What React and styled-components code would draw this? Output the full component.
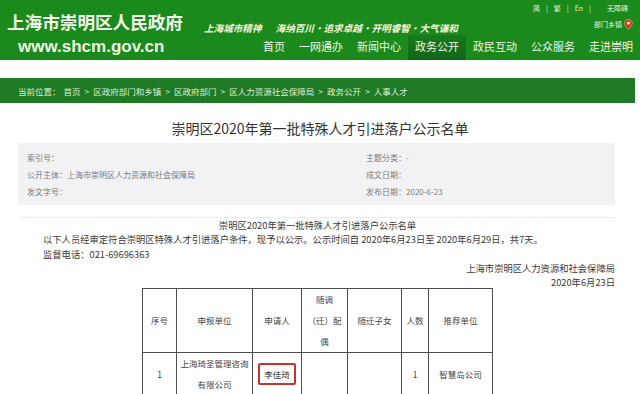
import React from "react";
import styled, { createGlobalStyle } from "styled-components";

const GlobalStyle = createGlobalStyle`
  html, body {
    margin: 0;
    padding: 0;
    background: #fff;
  }
  body {
    width: 640px;
    overflow: hidden;
    font-family: "Noto Sans CJK SC", "Noto Sans", sans-serif;
    color: #333;
  }
`;

const Header = styled.header`
  height: 60px;
  background: #1b8a1d;
  display: flex;
  color: #eef7e8;
`;

const Brand = styled.div`
  width: 192px;
  flex: none;
  padding: 11px 0 0 7px;
  box-sizing: border-box;
`;

const SiteName = styled.div`
  font-size: 17.6px;
  font-weight: 700;
  line-height: 22px;
  white-space: nowrap;
  color: #f2f8ee;
`;

const SiteUrl = styled.div`
  margin: 4px 0 0 11px;
  font-family: "Liberation Sans", Arial, sans-serif;
  font-size: 17px;
  font-weight: 700;
  line-height: 20px;
  color: #eef6e6;
`;

const HeaderRight = styled.div`
  flex: 1;
  display: flex;
  flex-direction: column;
`;

const TopLinks = styled.div`
  height: 16px;
  display: flex;
  align-items: center;
  justify-content: flex-end;
  gap: 6px;
  padding-right: 12px;
  font-size: 7px;
  color: #e4f2dc;
`;

const TopLink = styled.span`
  margin-left: ${(p) => (p.$wide ? "10px" : "0")};
`;

const MiddleRow = styled.div`
  height: 19px;
  display: flex;
  align-items: center;
  justify-content: space-between;
  padding: 0 7px 0 12px;
`;

const Slogan = styled.div`
  display: flex;
  gap: 14px;
  margin-top: 4px;
  font-size: 9.6px;
  font-weight: 700;
  font-style: italic;
  color: #f6f3dc;
  white-space: nowrap;
`;

const Departments = styled.div`
  display: flex;
  align-items: center;
  gap: 2px;
  margin-top: -3px;
  font-size: 7px;
  color: #eaf5e2;
`;

const Nav = styled.nav`
  height: 25px;
  display: flex;
  justify-content: flex-end;
`;

const NavItem = styled.a`
  padding: 0 7px;
  font-size: 11px;
  line-height: 23px;
  color: #eef7e8;
  text-decoration: none;
  white-space: nowrap;
  background: ${(p) =>
    p.$active ? "linear-gradient(#1a7a1c, #10651a)" : "transparent"};
`;

const Crumbs = styled.div`
  margin: 18px 5px 0 0;
  height: 25px;
  background: #1f7a26;
  display: flex;
  align-items: center;
  gap: 3px;
  padding-left: 18px;
  font-size: 8.5px;
  color: #dcefd4;
  white-space: nowrap;
`;

const Sep = styled.span`
  margin: 0 1px;
  color: #cfe6c6;
`;

const PageTitle = styled.h1`
  margin: 15px 0 0;
  text-align: center;
  font-size: 14px;
  font-weight: 400;
  line-height: 20px;
  color: #333;
`;

const InfoBox = styled.div`
  margin: 5px 25px 0 18px;
  height: 62px;
  box-sizing: border-box;
  background: #f2f2f4;
  padding: 6px 0 0 9px;
  display: grid;
  grid-template-columns: 339px 1fr;
  grid-auto-rows: 17px;
  align-items: center;
  font-size: 8px;
  color: #7a7a7a;
`;

const Notice = styled.section`
  margin: 12px 25px 0 20px;
  border-top: 1px solid #ececec;
`;

const NoticeText = styled.div`
  padding-left: 23px;
  font-size: 9.3px;
  line-height: 14.3px;
  color: #3a3a3a;
  white-space: nowrap;
`;

const Line = styled.div`
  text-align: ${(p) => p.$align || "left"};
  margin-left: ${(p) => (p.$align === "center" ? "-23px" : "0")};
`;

const Table = styled.table`
  margin: -1px auto 0;
  width: 350px;
  table-layout: fixed;
  border-collapse: collapse;
  font-size: 8.5px;
  color: #444;
`;

const Col = styled.col`
  width: ${(p) => p.$w}px;
`;

const Cell = styled.td`
  border: 1px solid #4d4d4d;
  padding: 0;
  text-align: center;
  vertical-align: middle;
  line-height: 21px;
  white-space: nowrap;
`;

const HeadCell = styled(Cell).attrs({ as: "th" })`
  height: 63px;
  font-weight: 400;
`;

const Marked = styled.span`
  display: inline-block;
  padding: 2px 4px;
  line-height: 14px;
  border: 2px solid #c8322f;
  border-radius: 2px;
  color: #333;
`;

const Pin = () => (
  <svg width="9" height="11" viewBox="0 0 9 11">
    <path
      d="M4.5 0.6C2.3 0.6 0.7 2.2 0.7 4.3c0 2.6 3.8 6.2 3.8 6.2s3.8-3.6 3.8-6.2C8.3 2.2 6.7 0.6 4.5 0.6z"
      fill="#d8322a"
      stroke="#f0a43a"
      strokeWidth="0.8"
    />
    <circle cx="4.5" cy="4.2" r="1.4" fill="#fff" />
  </svg>
);

const navItems = ["首页", "一网通办", "新闻中心", "政务公开", "政民互动", "公众服务", "走进崇明"];

const crumbs = ["首页", "区政府部门和乡镇", "区政府部门", "区人力资源社会保障局", "政务公开", "人事人才"];

const widths = [34, 76, 49, 46, 54, 27, 64];

export default function App() {
  return (
    <>
      <GlobalStyle />
      <Header>
        <Brand>
          <SiteName>上海市崇明区人民政府</SiteName>
          <SiteUrl>www.shcm.gov.cn</SiteUrl>
        </Brand>
        <HeaderRight>
          <TopLinks>
            <TopLink>简</TopLink>
            <TopLink>|</TopLink>
            <TopLink>繁</TopLink>
            <TopLink>|</TopLink>
            <TopLink>En</TopLink>
            <TopLink>|</TopLink>
            <TopLink $wide>无障碍</TopLink>
          </TopLinks>
          <MiddleRow>
            <Slogan>
              <span>上海城市精神</span>
              <span>海纳百川·追求卓越·开明睿智·大气谦和</span>
            </Slogan>
            <Departments>
              部门乡镇
              <Pin />
            </Departments>
          </MiddleRow>
          <Nav>
            {navItems.map((item) => (
              <NavItem key={item} $active={item === "政务公开"}>
                {item}
              </NavItem>
            ))}
          </Nav>
        </HeaderRight>
      </Header>

      <Crumbs>
        <span>当前位置：</span>
        {crumbs.map((c, i) => (
          <React.Fragment key={c}>
            {i > 0 && <Sep>&gt;</Sep>}
            <span>{c}</span>
          </React.Fragment>
        ))}
      </Crumbs>

      <PageTitle>崇明区2020年第一批特殊人才引进落户公示名单</PageTitle>

      <InfoBox>
        <span>索引号：</span>
        <span>主题分类：-</span>
        <span>公开主体：上海市崇明区人力资源和社会保障局</span>
        <span>成文日期：</span>
        <span>发文字号：</span>
        <span>发布日期：2020-6-23</span>
      </InfoBox>

      <Notice>
        <NoticeText>
          <Line $align="center">崇明区2020年第一批特殊人才引进落户公示名单</Line>
          <Line>
            以下人员经审定符合崇明区特殊人才引进落户条件，现予以公示。公示时间自 2020年6月23日至 2020年6月29日，共7天。
          </Line>
          <Line>监督电话：021-69696363</Line>
          <Line $align="right">上海市崇明区人力资源和社会保障局</Line>
          <Line $align="right">2020年6月23日</Line>
        </NoticeText>

        <Table>
          <colgroup>
            {widths.map((w, i) => (
              <Col key={i} $w={w} />
            ))}
          </colgroup>
          <thead>
            <tr>
              <HeadCell>序号</HeadCell>
              <HeadCell>申报单位</HeadCell>
              <HeadCell>申请人</HeadCell>
              <HeadCell>
                随调
                <br />
                （迁）配
                <br />偶
              </HeadCell>
              <HeadCell>随迁子女</HeadCell>
              <HeadCell>人数</HeadCell>
              <HeadCell>推荐单位</HeadCell>
            </tr>
          </thead>
          <tbody>
            <tr>
              <Cell>1</Cell>
              <Cell>
                上海琦圣管理咨询
                <br />
                有限公司
              </Cell>
              <Cell>
                <Marked>李佳琦</Marked>
              </Cell>
              <Cell />
              <Cell />
              <Cell>1</Cell>
              <Cell>智慧岛公司</Cell>
            </tr>
          </tbody>
        </Table>
      </Notice>
    </>
  );
}
